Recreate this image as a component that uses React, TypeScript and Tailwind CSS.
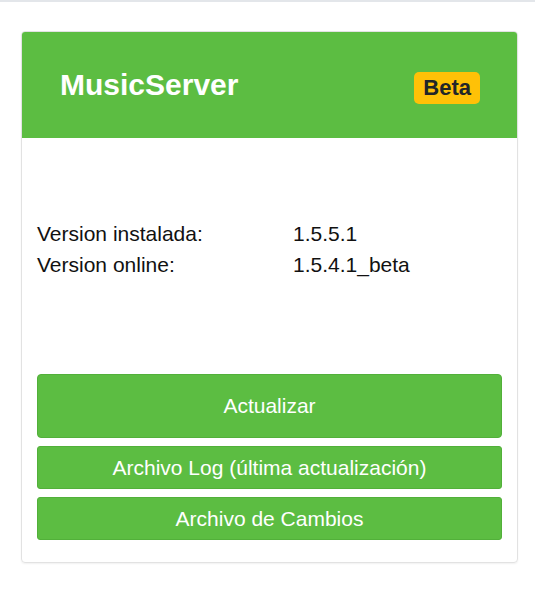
import React from "react";

export default function App() {
  return (
    <div
      className="min-h-[607px] w-[535px] bg-white"
      style={{ fontFamily: '"Liberation Sans", Arial, sans-serif' }}
    >
      <div className="h-[2px] bg-[#e3e6ea]" />
      <div className="px-[21px] pt-[29px]">
        <div className="w-[497px] rounded-[4px] border border-[#e2e2e2] shadow-[0_1px_2px_rgba(0,0,0,0.06)] overflow-hidden">
          <div className="h-[106px] bg-[#5cbd42] flex items-center justify-between pl-[38px] pr-[37px]">
            <span className="text-white font-bold text-[30px] leading-none">MusicServer</span>
            <span className="mt-[5px] h-[32px] px-[9px] rounded-[5px] bg-[#ffc107] text-[#212529] font-bold text-[22px] leading-[32px]">
              Beta
            </span>
          </div>
          <div className="px-[15px] pt-[16px] pb-[22px]">
            <div className="mt-[64px] grid grid-cols-[256px_1fr] text-[21px] leading-[31px] text-[#111]">
              <span>Version instalada:</span>
              <span>1.5.5.1</span>
              <span>Version online:</span>
              <span>1.5.4.1_beta</span>
            </div>
            <div className="mt-[94px] flex flex-col gap-[8px]">
              <button className="h-[64px] rounded-[4px] bg-[#5cbd42] border border-[#52b03a] text-white text-[21px]">
                Actualizar
              </button>
              <button className="h-[43px] rounded-[3px] bg-[#5cbd42] border border-[#52b03a] text-white text-[21px]">
                Archivo Log (última actualización)
              </button>
              <button className="h-[43px] rounded-[3px] bg-[#5cbd42] border border-[#52b03a] text-white text-[21px]">
                Archivo de Cambios
              </button>
            </div>
          </div>
        </div>
      </div>
    </div>
  );
}
